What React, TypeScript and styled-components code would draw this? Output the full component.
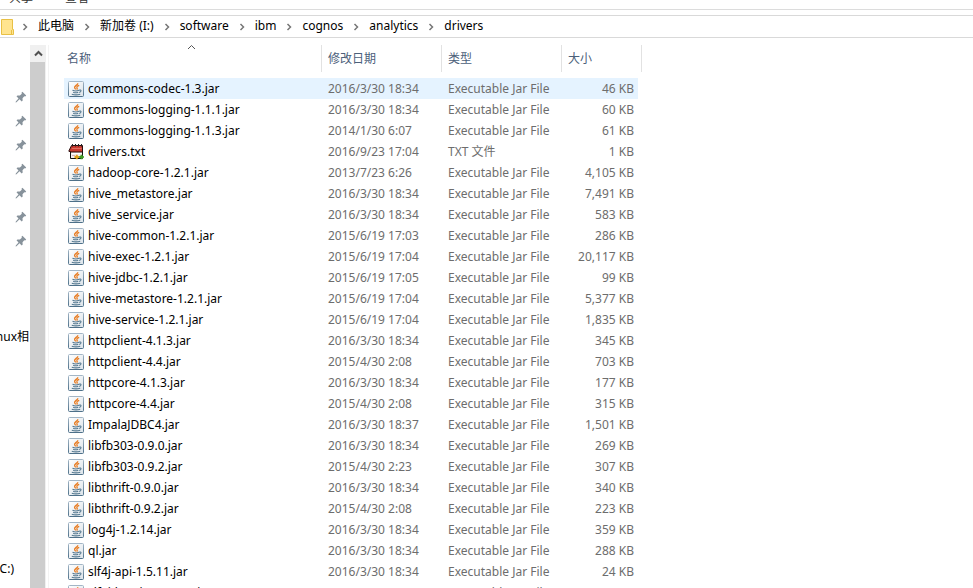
import React from "react";
import styled, { createGlobalStyle } from "styled-components";

const GlobalStyle = createGlobalStyle`
  * { box-sizing: border-box; }
  html, body { margin: 0; overflow: hidden; }
  body {
    background: #fff;
    color: #000;
    font: 12px/21px "Noto Sans", "Noto Sans CJK SC", sans-serif;
  }
  button, a { font: inherit; color: inherit; }
`;

const Window = styled.div`
  display: flex;
  flex-direction: column;
  height: 100vh;
  overflow: hidden;
`;

const RibbonTabs = styled.nav`
  flex: none;
  display: flex;
  align-items: flex-end;
  gap: 32px;
  height: 10px;
  padding: 0 9px 2px;
  overflow: hidden;
  border-bottom: 1px solid #dcdcdc;
`;

const RibbonTab = styled.button`
  border: 0;
  padding: 0;
  background: none;
  color: #333;
  line-height: 18px;
`;

const AddressBar = styled.nav`
  flex: none;
  display: flex;
  align-items: center;
  height: 23px;
  margin-top: 5px;
  border: solid #d9d9d9;
  border-width: 1px 0;
`;

const FolderIcon = styled.svg`
  flex: none;
  width: 14px;
  height: 18px;
`;

const Crumbs = styled.ol`
  display: flex;
  margin: 0 0 0 -2px;
  padding: 0 0 2px;
  list-style: none;
`;

const Crumb = styled.li`
  display: flex;
  align-items: center;
  white-space: nowrap;
`;

const CrumbLink = styled.a`
  text-decoration: none;
`;

const Separator = styled.svg`
  width: 6px;
  height: 8px;
  margin: 2px 10px 0;
`;

const Body = styled.div`
  flex: 1;
  min-height: 0;
  display: flex;
  padding-top: 7px;
`;

const Sidebar = styled.aside`
  flex: none;
  display: flex;
  flex-direction: column;
  align-items: flex-end;
  width: 30px;
  padding-top: 40px;
  overflow: hidden;
`;

const PinList = styled.ul`
  display: flex;
  flex-direction: column;
  margin: 0;
  padding: 0 3px 0 0;
  list-style: none;
`;

const PinItem = styled.li`
  display: flex;
  align-items: center;
  height: 24px;
`;

const SidebarItem = styled.a<{ $gap: number; $inset: number }>`
  margin-top: ${(p) => p.$gap}px;
  padding-right: ${(p) => p.$inset}px;
  text-decoration: none;
  white-space: nowrap;
`;

const Scrollbar = styled.div`
  flex: none;
  display: flex;
  flex-direction: column;
  width: 16px;
  background: #f0f0f0;
`;

const ScrollButton = styled.button`
  display: flex;
  align-items: center;
  justify-content: center;
  height: 17px;
  padding: 0;
  border: 0;
  background: #f0f0f0;
`;

const ScrollThumb = styled.div`
  flex: 1;
  margin-right: 1px;
  background: #cdcdcd;
`;

const Content = styled.main`
  flex: 1;
  margin-left: 2px;
  padding-left: 15px;
  border-left: 1px solid #f3f3f3;
`;

const FileTable = styled.table`
  width: 574px;
  table-layout: fixed;
  border-collapse: collapse;
`;

const HeadCell = styled.th<{ $width: number }>`
  width: ${(p) => p.$width}px;
  height: 33px;
  padding: 0;
  vertical-align: top;
  font-weight: 400;
  &:last-child button { width: 80px; }
`;

const SortButton = styled.button`
  position: relative;
  display: block;
  width: 100%;
  height: 27px;
  padding: 0 3px;
  border: 0;
  border-right: 1px solid #e2e2e2;
  background: none;
  color: #4c607a;
  text-align: left;
  th + th & { padding-left: 6px; }
`;

const SortArrow = styled.svg`
  position: absolute;
  top: -1px;
  left: calc(50% - 6px);
`;

const FileRow = styled.tr<{ $selected: boolean }>`
  background: ${(p) => (p.$selected ? "#e5f3ff" : "transparent")};
`;

const Cell = styled.td<{ $right?: boolean }>`
  height: 21px;
  padding: 0 4px 0 6px;
  color: #6d6d6d;
  text-align: ${(p) => (p.$right ? "right" : "left")};
  white-space: nowrap;
`;

const NameCell = styled(Cell)`
  padding-left: 4px;
  color: #000;
`;

const FileName = styled.span`
  display: flex;
  align-items: center;
  gap: 4px;
`;

const JarIcon = () => (
  <svg width="16" height="16" viewBox="0 0 16 16" aria-hidden="true">
    <defs>
      <linearGradient id="paper" x1="0" y1="0" x2="1" y2="1">
        <stop offset="0" stopColor="#fff" />
        <stop offset="1" stopColor="#dbe3e9" />
      </linearGradient>
      <linearGradient id="frame" x1="0" y1="0" x2="0" y2="1">
        <stop offset="0" stopColor="#a3b6c6" />
        <stop offset="1" stopColor="#4d7089" />
      </linearGradient>
    </defs>
    <rect x=".5" y=".5" width="15" height="15" rx="1" fill="url(#paper)" stroke="url(#frame)" />
    <path d="M9.800 2.200C10 4 6.200 4.800 6.600 6.600c.2.800.8 1.200 1.200 1.800M11.200 4.400C9.800 5 8.400 5.600 9 6.800c.4.700.3 1.200-.2 1.800" fill="none" stroke="#e87a1e" strokeWidth="1.300" />
    <path d="M4.500 9.200c1.500.7 5 .7 6.500 0M5.200 11.200c1.300.6 3.700.6 5 0M3.800 13.200c2 .6 6.400.6 8.400 0M11 9.200c2.600-1 2.700 1.400.2 2.200" fill="none" stroke="#54788f" strokeWidth="1.100" />
  </svg>
);

const TextIcon = () => (
  <svg width="16" height="16" viewBox="0 0 16 16" aria-hidden="true">
    <path d="M2.500 7.500h12v7h-12z" fill="#f7eeee" stroke="#111" />
    <path d="M3.500 1.500h11v6.500H3L.8 7.200z" fill="#cb3a30" stroke="#2a0c0c" />
    <path d="M3.800 4.500h10" stroke="#e26d5f" />
    <path d="M4.500 0v2.500M7.500 0v2.500M10.500 0v2.500M13.500 0v2.500" stroke="#222" />
    <path d="M3.500 9.500h10" stroke="#fff" />
    <path d="M4 11.500h3" stroke="#d3b5b4" />
    <path d="M6.500 13h4.500M8.800 10.800v4.500" stroke="#dfa01d" strokeWidth="2" />
    <path d="M11.200 13h4.600M13.500 10.800v4.500" stroke="#3f9b24" strokeWidth="2" />
  </svg>
);

const PinIcon = () => (
  <svg width="12" height="12" viewBox="0 0 12 12" aria-hidden="true">
    <path d="M7.400.8 11.200 4.600l-1 .9-.9-.2-1.800 1.900.2 2.400-1 .9-2.200-2.200L1.500 11.200.6 11.400.8 10.500l2.700-3-2-2.200 1-.9 2.400.2 1.900-1.900L6.500 1.700z" fill="#87929b" />
  </svg>
);

const UpArrow = () => (
  <svg width="9" height="7" viewBox="0 0 9 7" aria-hidden="true">
    <path d="M1 5.500 4.500 2 8 5.500" fill="none" stroke="#505050" strokeWidth="2" />
  </svg>
);

const crumbs = ["此电脑", "新加卷 (I:)", "software", "ibm", "cognos", "analytics", "drivers"];

const columns = [
  { label: "名称", width: 258 },
  { label: "修改日期", width: 120 },
  { label: "类型", width: 120 },
  { label: "大小", width: 76 },
];

const files: [string, string, string][] = [
  ["commons-codec-1.3.jar", "2016/3/30 18:34", "46 KB"],
  ["commons-logging-1.1.1.jar", "2016/3/30 18:34", "60 KB"],
  ["commons-logging-1.1.3.jar", "2014/1/30 6:07", "61 KB"],
  ["drivers.txt", "2016/9/23 17:04", "1 KB"],
  ["hadoop-core-1.2.1.jar", "2013/7/23 6:26", "4,105 KB"],
  ["hive_metastore.jar", "2016/3/30 18:34", "7,491 KB"],
  ["hive_service.jar", "2016/3/30 18:34", "583 KB"],
  ["hive-common-1.2.1.jar", "2015/6/19 17:03", "286 KB"],
  ["hive-exec-1.2.1.jar", "2015/6/19 17:04", "20,117 KB"],
  ["hive-jdbc-1.2.1.jar", "2015/6/19 17:05", "99 KB"],
  ["hive-metastore-1.2.1.jar", "2015/6/19 17:04", "5,377 KB"],
  ["hive-service-1.2.1.jar", "2015/6/19 17:04", "1,835 KB"],
  ["httpclient-4.1.3.jar", "2016/3/30 18:34", "345 KB"],
  ["httpclient-4.4.jar", "2015/4/30 2:08", "703 KB"],
  ["httpcore-4.1.3.jar", "2016/3/30 18:34", "177 KB"],
  ["httpcore-4.4.jar", "2015/4/30 2:08", "315 KB"],
  ["ImpalaJDBC4.jar", "2016/3/30 18:37", "1,501 KB"],
  ["libfb303-0.9.0.jar", "2016/3/30 18:34", "269 KB"],
  ["libfb303-0.9.2.jar", "2015/4/30 2:23", "307 KB"],
  ["libthrift-0.9.0.jar", "2016/3/30 18:34", "340 KB"],
  ["libthrift-0.9.2.jar", "2015/4/30 2:08", "223 KB"],
  ["log4j-1.2.14.jar", "2016/3/30 18:34", "359 KB"],
  ["ql.jar", "2016/3/30 18:34", "288 KB"],
  ["slf4j-api-1.5.11.jar", "2016/3/30 18:34", "24 KB"],
  ["slf4j-log4j12-1.5.11.jar", "2016/3/30 18:34", "10 KB"],
];

export default function App() {
  return (
    <>
      <GlobalStyle />
      <Window>
        <RibbonTabs aria-label="功能区">
          <RibbonTab>共享</RibbonTab>
          <RibbonTab>查看</RibbonTab>
        </RibbonTabs>
        <AddressBar aria-label="地址">
          <FolderIcon viewBox="0 0 14 18" aria-hidden="true">
            <path d="M1.500 1.500h11v10h1v5h-12z" fill="#ffe48f" stroke="#e8c045" />
            <path d="M11.500 12v4" stroke="#e8c045" />
          </FolderIcon>
          <Crumbs>
            {crumbs.map((name) => (
              <Crumb key={name}>
                <Separator viewBox="0 0 6 8" aria-hidden="true">
                  <path d="M1.500 1 4.500 4l-3 3" fill="none" stroke="#777" strokeWidth="1.500" />
                </Separator>
                <CrumbLink href="#">{name}</CrumbLink>
              </Crumb>
            ))}
          </Crumbs>
        </AddressBar>
        <Body>
          <Sidebar>
            <PinList>
              {Array.from({ length: 7 }, (_, i) => (
                <PinItem key={i}>
                  <PinIcon />
                </PinItem>
              ))}
            </PinList>
            <SidebarItem href="#" $gap={73} $inset={1}>Linux相</SidebarItem>
            <SidebarItem href="#" $gap={211} $inset={16}>(C:)</SidebarItem>
          </Sidebar>
          <Scrollbar>
            <ScrollButton aria-label="向上滚动">
              <UpArrow />
            </ScrollButton>
            <ScrollThumb />
          </Scrollbar>
          <Content>
            <FileTable>
              <thead>
                <tr>
                  {columns.map((c, i) => (
                    <HeadCell key={c.label} $width={c.width} scope="col">
                      <SortButton>
                        {c.label}
                        {i === 0 && (
                          <SortArrow width="9" height="6" viewBox="0 0 9 6" aria-hidden="true">
                            <path d="M1 5 4.500 1.500 8 5" fill="none" stroke="#555" />
                          </SortArrow>
                        )}
                      </SortButton>
                    </HeadCell>
                  ))}
                </tr>
              </thead>
              <tbody>
                {files.map(([name, date, size], i) => {
                  const isText = name.endsWith(".txt");
                  return (
                    <FileRow key={name} $selected={i === 0}>
                      <NameCell>
                        <FileName>
                          {isText ? <TextIcon /> : <JarIcon />}
                          {name}
                        </FileName>
                      </NameCell>
                      <Cell>{date}</Cell>
                      <Cell>{isText ? "TXT 文件" : "Executable Jar File"}</Cell>
                      <Cell $right>{size}</Cell>
                    </FileRow>
                  );
                })}
              </tbody>
            </FileTable>
          </Content>
        </Body>
      </Window>
    </>
  );
}
